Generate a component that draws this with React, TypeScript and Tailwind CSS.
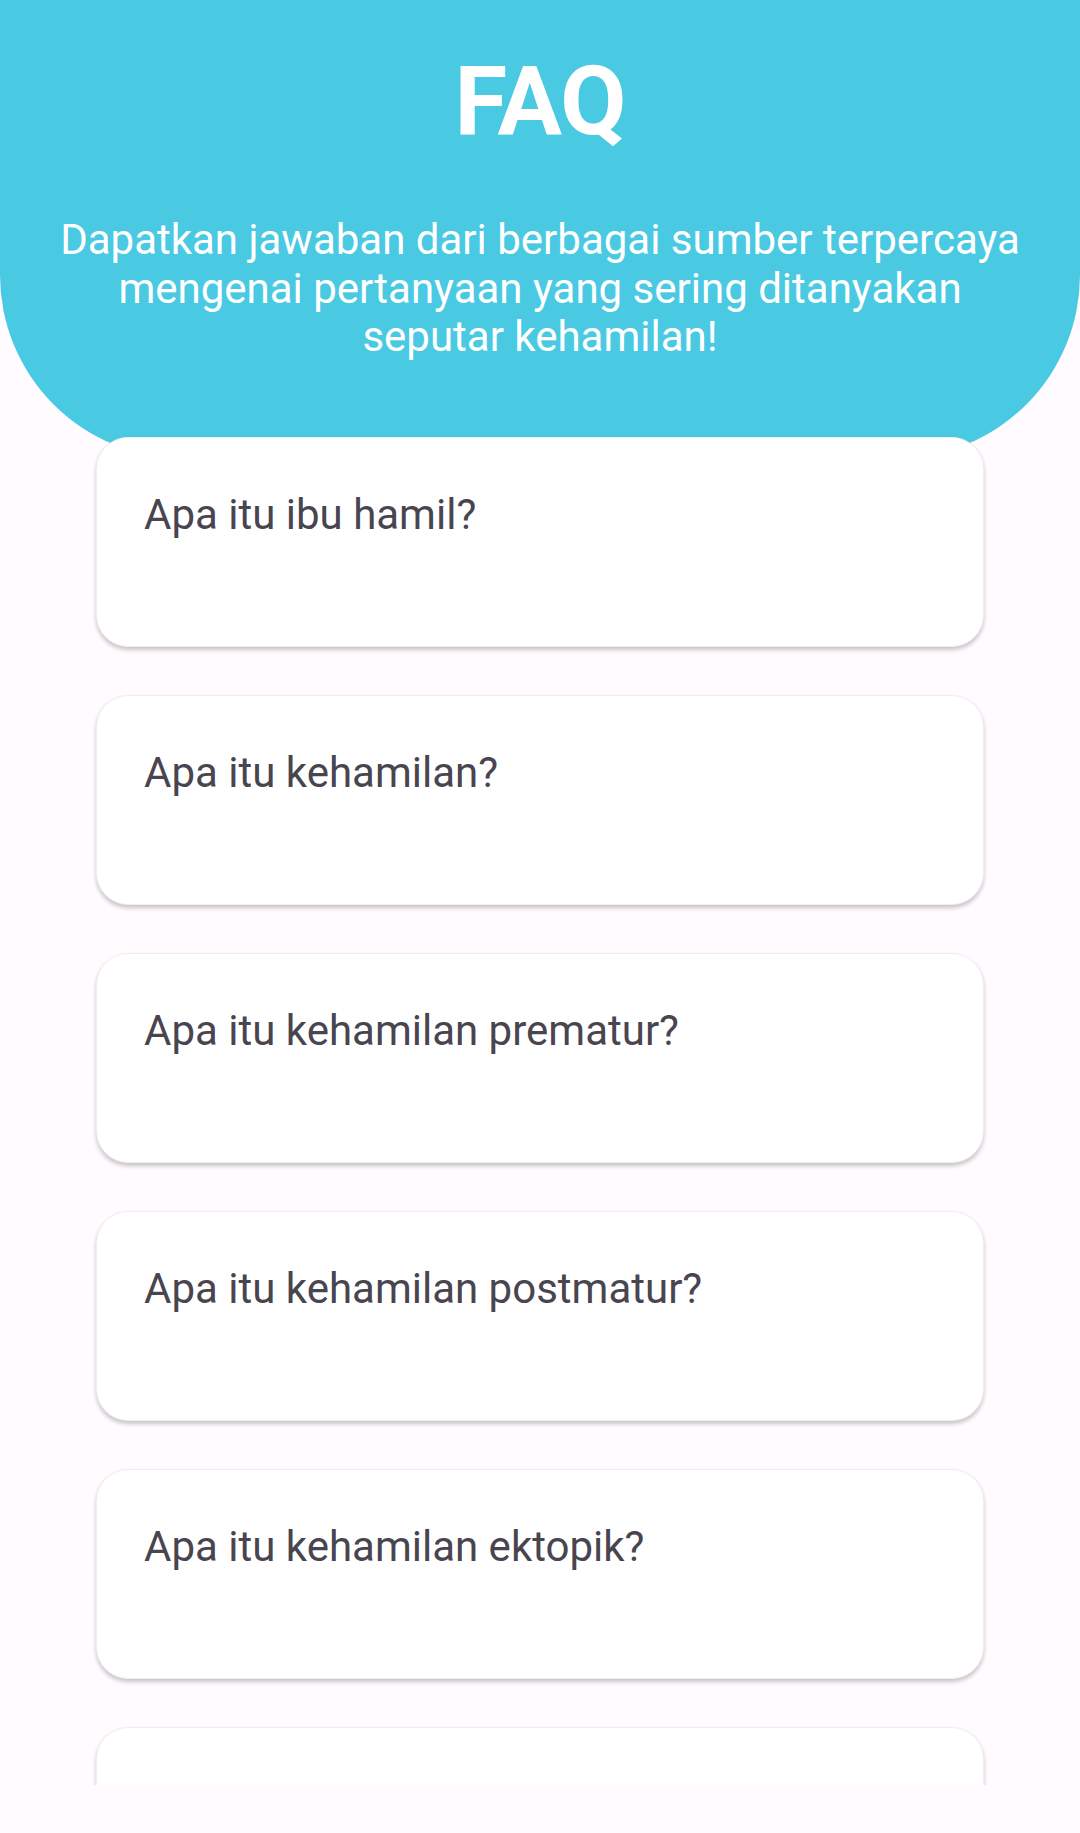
import React from "react";

const questions = [
  "Apa itu ibu hamil?",
  "Apa itu kehamilan?",
  "Apa itu kehamilan prematur?",
  "Apa itu kehamilan postmatur?",
  "Apa itu kehamilan ektopik?",
  "",
];

export default function App() {
  return (
    <div
      className="w-[1080px] h-[1833px] bg-[#FFFBFE]"
      style={{ fontFamily: "Roboto, 'Noto Sans', sans-serif" }}
    >
      <div className="h-[1785px] overflow-hidden">
        <header className="h-[458px] bg-[#4AC9E3] rounded-b-[183px] flex flex-col items-center pt-[45px]">
          <h1 className="text-[96px] font-bold text-white leading-[112px] tracking-[-1px]">
            FAQ
          </h1>
          <p className="mt-[59px] text-[42px] leading-[48.5px] text-white text-center">
            Dapatkan jawaban dari berbagai sumber terpercaya
            <br />
            mengenai pertanyaan yang sering ditanyakan
            <br />
            seputar kehamilan!
          </p>
        </header>
        <div className="relative -mt-[21px] px-[96px] flex flex-col gap-[48px]">
          {questions.map((q, i) => (
            <div
              key={i}
              className="h-[210px] shrink-0 rounded-[32px] bg-white border border-[#f1eef1] shadow-[0_3px_4px_rgba(0,0,0,0.22)] pt-[52px] pl-[47px]"
            >
              {q && (
                <p className="text-[42px] leading-[49px] text-[#49454F]">{q}</p>
              )}
            </div>
          ))}
        </div>
      </div>
    </div>
  );
}
